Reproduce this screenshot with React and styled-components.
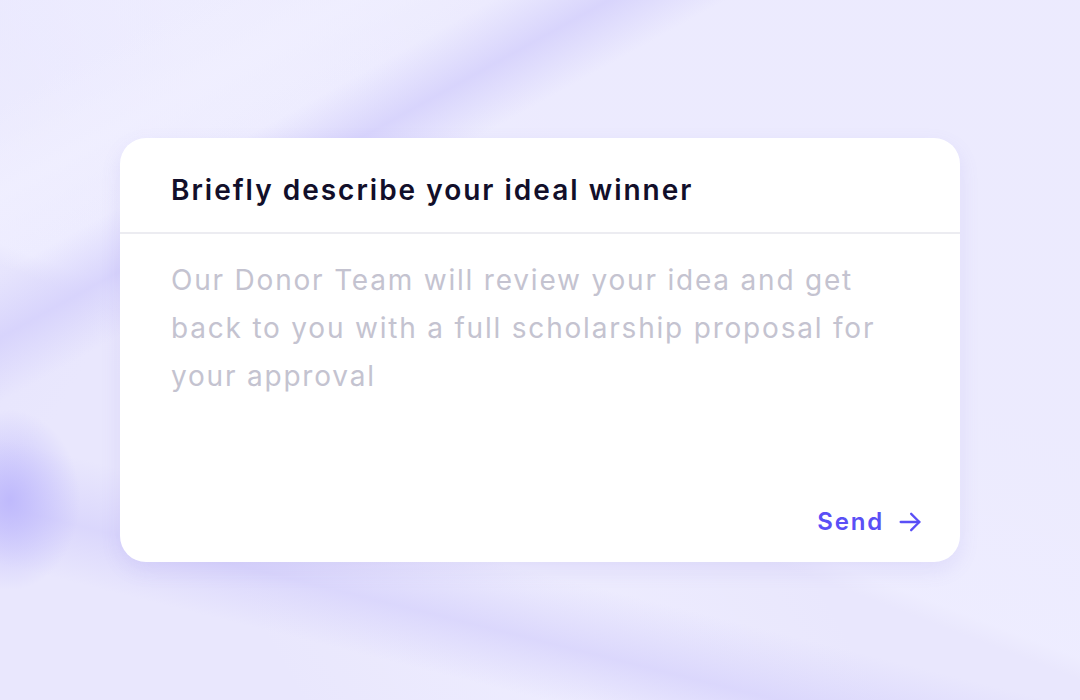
import React from "react";
import styled, { createGlobalStyle } from "styled-components";

const GlobalStyle = createGlobalStyle`
  html, body {
    margin: 0;
    padding: 0;
  }
  body {
    font-family: Inter, "Noto Sans", sans-serif;
  }
`;

const Page = styled.main`
  width: 1080px;
  height: 700px;
  box-sizing: border-box;
  padding: 138px 120px 0;
  overflow: hidden;
  background-color: #e9e7fd;
  background-image:
    radial-gradient(ellipse 70px 90px at 10px 500px, rgba(188, 182, 252, 0.9), rgba(188, 182, 252, 0)),
    linear-gradient(151deg, rgba(214, 210, 252, 0) 21%, rgba(214, 210, 252, 0.9) 26%, rgba(214, 210, 252, 0) 31%),
    linear-gradient(151deg, rgba(240, 239, 255, 0) 8%, rgba(240, 239, 255, 0.8) 15%, rgba(240, 239, 255, 0) 21%),
    linear-gradient(14deg, rgba(216, 212, 252, 0) 14%, rgba(216, 212, 252, 0.85) 20%, rgba(216, 212, 252, 0) 27%),
    linear-gradient(21deg, rgba(238, 237, 255, 0) 39%, rgba(238, 237, 255, 0.9) 41%, rgba(238, 237, 255, 0.6) 60%),
    linear-gradient(60deg, rgba(233, 231, 254, 0) 20%, rgba(240, 239, 255, 0.7) 40%, rgba(240, 239, 255, 0) 60%),
    linear-gradient(120deg, rgba(228, 226, 253, 1) 0%, rgba(233, 231, 254, 0) 20%);
`;

const Card = styled.section`
  width: 840px;
  height: 424px;
  background: #ffffff;
  border-radius: 26px;
  box-shadow: 0 8px 20px rgba(120, 110, 220, 0.12);
  display: flex;
  flex-direction: column;
  overflow: hidden;
`;

const Header = styled.header`
  height: 96px;
  box-sizing: border-box;
  padding: 10px 51px 0;
  display: flex;
  align-items: center;
  border-bottom: 2px solid #ececf1;
`;

const Title = styled.h1`
  margin: 0;
  font-size: 28px;
  font-weight: 600;
  color: #120f2a;
  letter-spacing: 2px;
`;

const Body = styled.div`
  flex: 1;
  padding: 22px 51px 0;
  font-size: 28px;
  line-height: 48px;
  color: #c4c3d0;
  font-weight: 400;
  letter-spacing: 1.8px;
`;

const Footer = styled.footer`
  display: flex;
  justify-content: flex-end;
  padding: 0 36px 26px;
`;

const SendButton = styled.button`
  display: flex;
  align-items: center;
  gap: 12px;
  border: none;
  background: none;
  padding: 0;
  font-family: inherit;
  font-size: 24px;
  font-weight: 600;
  letter-spacing: 1.8px;
  color: #5a4ff6;
  cursor: pointer;
`;

const Arrow = () => (
  <svg width="28" height="28" viewBox="0 0 24 24" fill="none" stroke="#5a4ff6" strokeWidth="2" strokeLinecap="round" strokeLinejoin="round">
    <path d="M4 12h16" />
    <path d="M13 5l7 7-7 7" />
  </svg>
);

export default function App() {
  return (
    <Page>
      <GlobalStyle />
      <Card>
        <Header>
          <Title>Briefly describe your ideal winner</Title>
        </Header>
        <Body>
          Our Donor Team will review your idea and get back to you with a full scholarship proposal for your approval
        </Body>
        <Footer>
          <SendButton>
            Send
            <Arrow />
          </SendButton>
        </Footer>
      </Card>
    </Page>
  );
}
